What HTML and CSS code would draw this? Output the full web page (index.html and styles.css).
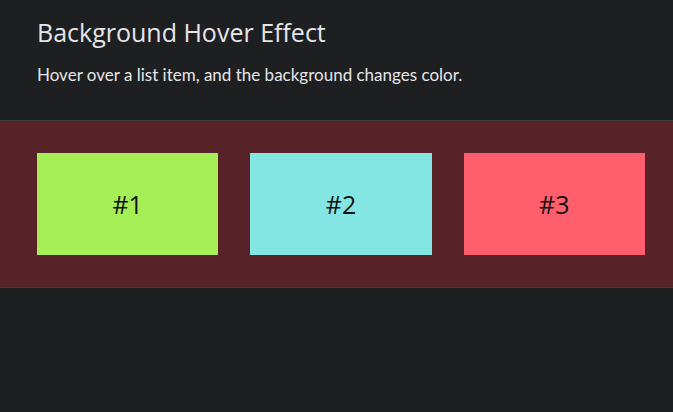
FILE: index.html
```html
<!DOCTYPE html>
<html>
<head>
  <title>Background Hover Effect</title>
  <link rel="stylesheet" href="styles.css">
</head>
<body>
  <header class="intro">
    <h1>Background Hover Effect</h1>
    <p>Hover over a list item, and the background changes color.</p>
  </header>

  <section class="band">
    <ul class="items">
      <li class="item item-green">#1</li>
      <li class="item item-cyan">#2</li>
      <li class="item item-red">#3</li>
    </ul>
  </section>
</body>
</html>
```

FILE: styles.css
```css
body {
  margin: 0;
  background-color: #1e1f21;
  color: #e6e6e8;
}
.intro {
  padding: 15px 37px 0;
  height: 120px;
  box-sizing: border-box;
}
.intro h1 {
  margin: 0;
  font-family: "Open Sans", sans-serif;
  font-weight: normal;
  font-size: 25px;
  line-height: 34px;
}
.intro p {
  margin: 14px 0 0;
  font-family: "Lato", sans-serif;
  font-size: 17px;
  line-height: 24px;
}
.band {
  background-color: #582328;
  border-top: 1px solid #3c3d3f;
  border-bottom: 1px solid #3c3d3f;
  padding: 32px 28px 32px 37px;
}
.items {
  list-style: none;
  margin: 0;
  padding: 0;
  display: grid;
  grid-template-columns: repeat(3, 1fr);
  gap: 32px;
}
.item {
  height: 102px;
  display: flex;
  align-items: center;
  justify-content: center;
  font-family: "Open Sans", sans-serif;
  font-size: 25px;
  color: #111;
}
.item-green {
  background-color: #a6ee56;
}
.item-cyan {
  background-color: #84e6e3;
}
.item-red {
  background-color: #ff5f6d;
}
```
